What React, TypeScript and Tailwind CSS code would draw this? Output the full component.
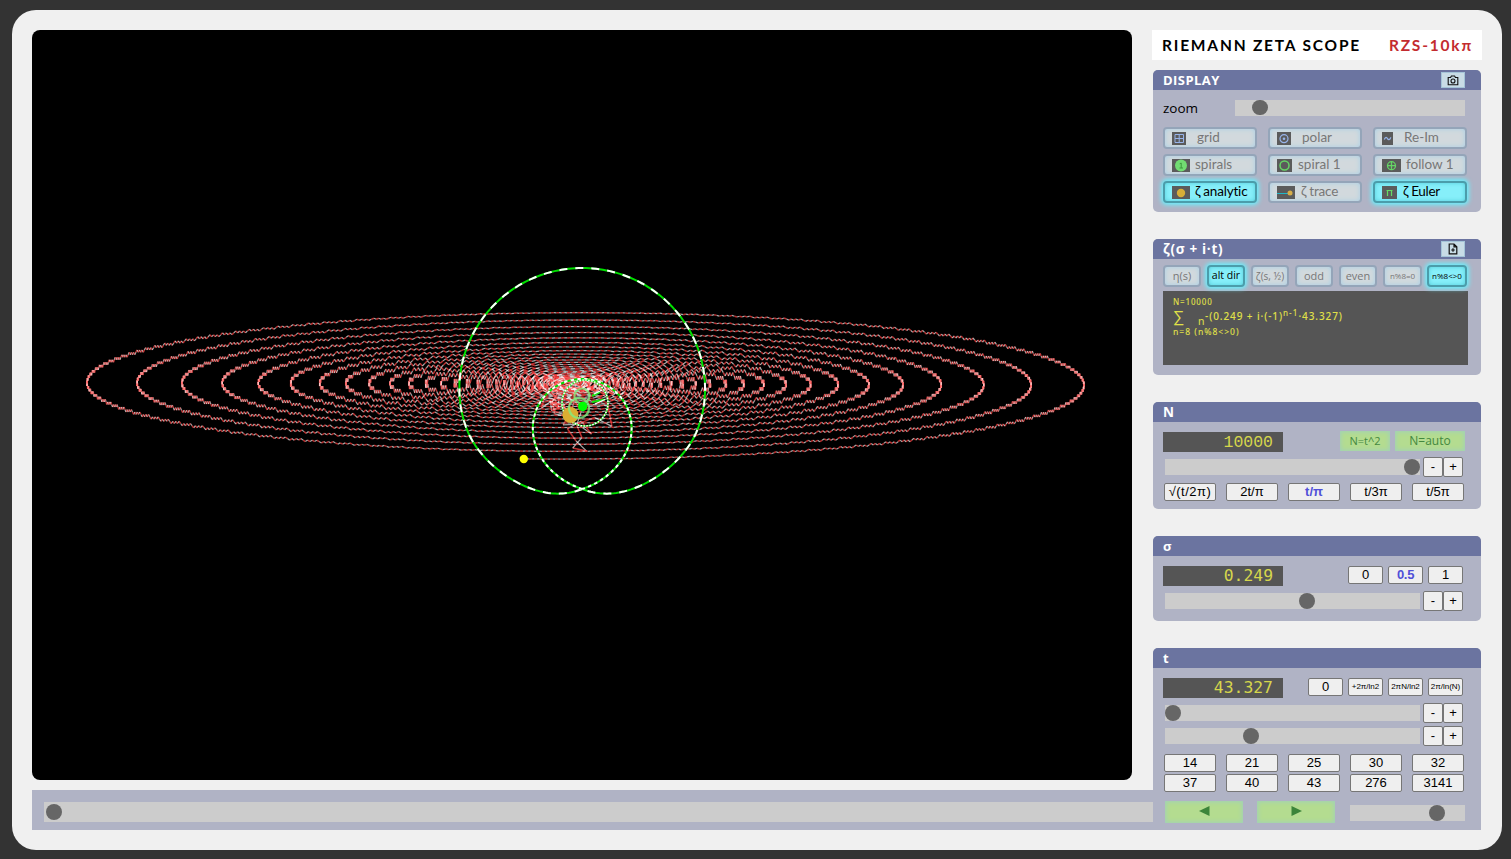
import React from "react";

const OX = 550;
const OY = 375;
const UNIT = 25.86;
const SIGMA = 0.249;
const T = 43.327;
const TERMS = 10000;

type Seg = { x1: number; y1: number; x2: number; y2: number; red: boolean };

function partialSums() {
  const segs: Seg[] = [];
  let x = 0;
  let y = 0;
  let k = 0;
  for (let n = 1; n <= TERMS; n++) {
    if (n % 8 === 0) continue;
    const m = Math.pow(n, -SIGMA);
    const a = (n % 2 === 1 ? -1 : 1) * T * Math.log(n);
    const nx = x + m * Math.cos(a);
    const ny = y + m * Math.sin(a);
    segs.push({
      x1: OX + x * UNIT,
      y1: OY - y * UNIT,
      x2: OX + nx * UNIT,
      y2: OY - ny * UNIT,
      red: k % 2 === 1,
    });
    x = nx;
    y = ny;
    k++;
  }
  return segs;
}

const SEGS = partialSums();
const f = (v: number) => v.toFixed(1);

// Limaçon; the outer lobe narrows towards the crossing and the inner loop is slightly widened.
function loopPath(from: number, to: number, inner: boolean) {
  let d = "";
  for (let i = 0; i <= 240; i++) {
    const th = from + ((to - from) * i) / 240;
    const r = 55.5 + 165.5 * Math.cos(th);
    const t = Math.min(1, Math.max(0, (Math.abs(th) - 1.1) / 0.6));
    const kx = inner ? 1.07 : 0.99 - 0.1 * t * t * (3 - 2 * t);
    d += (i ? "L" : "M") + f(550.2 + kx * r * Math.sin(th)) + " " + f(459 - r * Math.cos(th));
  }
  return d;
}
const CROSS = Math.acos(-55.5 / 165.5);
const OUTER = loopPath(-CROSS, CROSS, false);
const INNER = loopPath(CROSS, 2 * Math.PI - CROSS, true);

function Scope() {
  return (
    <svg width="1100" height="750" viewBox="0 0 1100 750" className="block">
      <g>
        {SEGS.map((s, i) => (
          <line
            key={i}
            x1={f(s.x1)}
            y1={f(s.y1)}
            x2={f(s.x2)}
            y2={f(s.y2)}
            stroke={s.red ? "#ff4040" : "#ffffff"}
            strokeOpacity={s.red ? 0.72 : 0.66}
            strokeWidth={s.red ? 1.5 : 1.2}
          />
        ))}
      </g>
      <g fill="none" strokeWidth="2">
        <path d={OUTER} stroke="#00e000" />
        <path d={OUTER} stroke="#fff" strokeDasharray="8 8" />
        <path d={INNER} stroke="#00e000" />
        <path d={INNER} stroke="#fff" strokeDasharray="3.4 3.4" />
        <circle cx="553" cy="373" r="23" stroke="#30e030" strokeWidth="1.6" />
        <circle cx="553" cy="373" r="23" stroke="#fff" strokeWidth="1.6" strokeDasharray="1.5 1.5" />
      </g>
      <circle cx="538.5" cy="385" r="8" fill="#dcae32" />
      <g fill="none" stroke="#80ee80" strokeWidth="2.2" strokeOpacity="0.8">
        <circle cx="550" cy="366" r="7.5" />
        <circle cx="547" cy="378" r="10" />
      </g>
      <path d="M560 366L568 362M560 372L573 369.5" stroke="#10e810" strokeWidth="2" fill="none" />
      <path d="M562 364L570 360M573 369.5L563 374" stroke="#fff" strokeWidth="1.3" fill="none" />
      <circle cx="550.7" cy="376.5" r="4.7" fill="#00ff00" />
      <circle cx="491.8" cy="429" r="4.2" fill="#ffff00" />
    </svg>
  );
}

function Slider({ box, thumb }: { box: string; thumb: string }) {
  return (
    <div className={`flex shrink-0 items-center bg-[#ccc] ${box}`}>
      <div className={`h-[15.5px] w-[15.5px] rounded-full bg-[#666] ${thumb}`} />
    </div>
  );
}

function Header({ children, icon }: { children: React.ReactNode; icon?: React.ReactNode }) {
  return (
    <div className="flex h-5 items-center justify-between rounded-t-[5px] bg-[#6b74a0] pr-4 pl-[10px] font-['Open_Sans',sans-serif] text-[13px] leading-5 font-bold text-white">
      <span>{children}</span>
      {icon && <span className="flex h-4 w-6 items-center justify-center border border-[#a4c4d8] bg-[#c8dce6] text-black">{icon}</span>}
    </div>
  );
}

const OFF = "border-[#94a5b9] bg-[#d2d9dd] text-[#777] shadow-[inset_0_0_5px_#a9d0e6]";
const ON = "border-[#4b9dab] bg-[#86effa] text-black shadow-[0_0_4px_2px_#6beefb,inset_0_0_4px_#56cedb]";

function Toggle({ on, icon, pad, children }: { on?: boolean; icon: React.ReactNode; pad: string; children: React.ReactNode }) {
  return (
    <button className={`flex h-[22px] w-[94px] items-center rounded-[4px] border-2 pl-[7px] font-[Lato,sans-serif] text-[13.5px] leading-none whitespace-nowrap ${on ? ON : OFF}`}>
      <span className="block h-[13px] bg-[#5b5b5b]">{icon}</span>
      <span className={pad}>{children}</span>
    </button>
  );
}

function Mode({ on, cls, children }: { on?: boolean; cls: string; children: React.ReactNode }) {
  return (
    <button className={`flex h-[22px] shrink-0 items-center justify-center rounded-[4px] border-2 font-['Open_Sans',sans-serif] whitespace-nowrap ${cls} ${on ? ON : OFF}`}>
      {children}
    </button>
  );
}

function Key({ cls, children }: { cls: string; children: React.ReactNode }) {
  return (
    <button className={`flex shrink-0 items-center justify-center rounded-[2px] border border-[#767676] bg-[#efefef] font-['Liberation_Sans',sans-serif] leading-none whitespace-nowrap ${cls}`}>
      {children}
    </button>
  );
}

function Green({ cls, children }: { cls: string; children: React.ReactNode }) {
  return (
    <button className={`flex shrink-0 items-center justify-center bg-[#b4dc90] font-['Open_Sans',sans-serif] text-[#43883f] shadow-[inset_0_0_4px_1px_#a0d0b8] ${cls}`}>
      {children}
    </button>
  );
}

function Readout({ cls, children }: { cls: string; children: React.ReactNode }) {
  return <div className={`flex h-5 w-[120px] shrink-0 items-center justify-end bg-[#555] pr-[10px] leading-none text-[#d6d64c] ${cls}`}>{children}</div>;
}

function SliderRow({ thumb, mt }: { thumb: string; mt: string }) {
  return (
    <div className={`ml-3 flex h-5 items-center ${mt}`}>
      <Slider box="h-4 w-[255px]" thumb={thumb} />
      <Key cls="ml-[3px] h-5 w-5 pb-px text-[13px]">-</Key>
      <Key cls="h-5 w-5 pb-px text-[13px]">+</Key>
    </div>
  );
}

const PANEL = "ml-px w-[328px] bg-[#b0b3c5]";
const WIDE = "h-[18px] w-[52px] pb-[2px] text-[13px]";
const SMALL = "h-[18px] w-[35px] pb-[2px] text-[13px]";
const TINY = "ml-[5px] h-[18px] w-[35px] text-[8px]";

const svg = (w: number, body: React.ReactNode) => (
  <svg width={w} height="13" viewBox={`0 0 ${w} 13`} fill="none" className="block">
    {body}
  </svg>
);

export default function App() {
  return (
    <div className="h-[859px] w-[1511px] overflow-hidden bg-[#333] pt-[10px] pl-3">
      <div className="flex h-[840px] w-[1490px] rounded-[24px] bg-[#f0f0f0] pt-5 pl-5">
        <div className="flex w-[1120px] shrink-0 flex-col">
          <div className="h-[750px] w-[1100px] overflow-hidden rounded-[8px] bg-black">
            <Scope />
          </div>
          <div className="mt-[10px] flex h-10 w-[1121px] items-start bg-[#b0b3c5] pt-3 pl-3">
            <Slider box="h-5 w-[1109px]" thumb="ml-[2px]" />
          </div>
        </div>

        <div className="flex w-[330px] shrink-0 flex-col">
          <div className="flex h-[30px] items-center justify-between bg-white pt-px pr-[9px] pl-[10px] font-[Lato,sans-serif] text-[15.5px] font-bold">
            <span className="tracking-[1.8px] whitespace-nowrap">RIEMANN ZETA SCOPE</span>
            <span className="tracking-[1.8px] text-[#c32b2f]">RZS-10kπ</span>
          </div>

          <section className={`${PANEL} mt-[10px] h-[142px] rounded-[5px]`}>
            <Header
              icon={
                <svg width="12" height="11" viewBox="0 0 12 11" fill="none" stroke="#111" strokeWidth="1.1">
                  <path d="M1.2 2.5H3.6L4.4 1H7.6L8.4 2.5H10.8V9.8H1.2Z" />
                  <circle cx="6" cy="6" r="2" />
                </svg>
              }
            >
              <span className="tracking-[0.45px]">DISPLAY</span>
            </Header>
            <div className="mt-[8px] flex h-5 items-center pl-[10px] font-['Open_Sans',sans-serif] text-[13.5px]">
              <span className="w-[72px]">zoom</span>
              <Slider box="-mt-px h-4 w-[230px]" thumb="ml-[17px]" />
            </div>
            <div className="mt-[9px] grid w-[304px] grid-cols-[94px_94px_94px] gap-x-[11px] gap-y-[5px] pl-[10px]">
              <Toggle pad="ml-[11px]" icon={svg(14, <path d="M3 2.5H11.5V10.5H3ZM7.2 2.5V10.5M3 6.5H11.5" stroke="#98b4ea" />)}>grid</Toggle>
              <Toggle pad="ml-[11px]" icon={svg(14, <><circle cx="7" cy="6.7" r="4" stroke="#98b4ea" strokeWidth="1.2" /><circle cx="7" cy="6.7" r="1.3" fill="#98b4ea" /></>)}>polar</Toggle>
              <Toggle pad="ml-[11px]" icon={svg(11, <path d="M2.3 7.6C3.5 4.5 4.7 5.2 5.5 6.6S7.8 8.4 8.8 5.4" stroke="#98b4ea" strokeWidth="1.3" />)}>Re-Im</Toggle>
              <Toggle pad="ml-[5px]" icon={svg(18, <><circle cx="9" cy="6.5" r="6" fill="#72dc72" /><path d="M7.7 4.8L9.2 4V9M7.5 9H11" stroke="#3c9a3c" /></>)}>spirals</Toggle>
              <Toggle pad="ml-[6px]" icon={svg(15, <circle cx="7.5" cy="6.5" r="4.5" stroke="#65d565" strokeWidth="1.5" />)}>spiral 1</Toggle>
              <Toggle pad="ml-[5px]" icon={svg(19, <><circle cx="9.5" cy="6.7" r="4" stroke="#65d565" strokeWidth="1.3" /><path d="M9.5 2.7V10.7M5.5 6.7H13.5" stroke="#65d565" strokeWidth="1.3" /></>)}>follow 1</Toggle>
              <Toggle on pad="ml-[5px] tracking-[-0.2px]" icon={svg(18, <circle cx="9" cy="7" r="4.2" fill="#d8ae38" />)}>ζ analytic</Toggle>
              <Toggle pad="ml-[6px] tracking-[-0.2px]" icon={svg(18, <><path d="M0 7.5H12" stroke="#20b8c8" /><circle cx="13" cy="7" r="2.5" fill="#d8ae48" /></>)}>ζ trace</Toggle>
              <Toggle on pad="ml-[6px] tracking-[-0.3px]" icon={svg(15, <path d="M5.5 10V4.5M9.5 10V4.5M4.5 4.5H10.5" stroke="#65dc65" strokeWidth="1.2" />)}>ζ Euler</Toggle>
            </div>
          </section>

          <section className={`${PANEL} mt-[27px] h-[136px] rounded-[5px]`}>
            <Header
              icon={
                <svg width="10" height="12" viewBox="0 0 10 12" fill="none" stroke="#111" strokeWidth="1.2">
                  <path d="M1.2 1H6L8.8 3.8V10.8H1.2ZM6 1V3.8H8.8M5 5.2V8.8M3.2 7H6.8" />
                </svg>
              }
            >
              <span className="text-[13.5px] tracking-[0.7px]">ζ(σ + i·t)</span>
            </Header>
            <div className="mt-[6px] flex h-[22px] w-[316px] pl-[10px]">
              <Mode cls="w-[38px] text-[11px]">η(s)</Mode>
              <Mode on cls="ml-[6px] w-[38px] text-[10.5px]">alt dir</Mode>
              <Mode cls="ml-[6px] w-[38px] text-[10px]">ζ(s, ½)</Mode>
              <Mode cls="ml-[6px] w-[38px] text-[11px]">odd</Mode>
              <Mode cls="ml-[6px] w-[38px] text-[11px]">even</Mode>
              <Mode cls="ml-[6px] w-[39px] text-[8px]">n%8=0</Mode>
              <Mode on cls="ml-[5px] w-[40px] text-[8px]">n%8&lt;&gt;0</Mode>
            </div>
            <div className="mt-[4px] ml-[10px] flex h-[74px] w-[305px] flex-col bg-[#555] pt-[5px] pl-[10px] font-['Noto_Sans',sans-serif] text-[#e0e048]">
              <div className="h-3 text-[8px] leading-3 font-medium tracking-[0.85px]">N=10000</div>
              <div className="flex h-[18px] whitespace-nowrap">
                <span className="w-[25px] text-[16px] leading-[16px]">∑</span>
                <span className="mt-[4px] text-[10.5px] leading-[18px] tracking-[0.6px]">n</span>
                <span className="text-[10px] leading-[17px] font-medium tracking-[0.9px]">-(0.249 + i·(-1)</span>
                <span className="-mt-[4px] text-[8px] leading-[17px] font-medium tracking-[1.1px]">n-1</span>
                <span className="text-[10px] leading-[17px] font-medium tracking-[0.9px]">·43.327)</span>
              </div>
              <div className="h-3 text-[8.5px] leading-3 font-medium tracking-[1px]">n=8 (n%8&lt;&gt;0)</div>
            </div>
          </section>

          <section className={`${PANEL} mt-[27px] h-[107px] rounded-[5px]`}>
            <Header><span className="text-[13.5px]">N</span></Header>
            <div className="mt-[9px] flex h-[21px] pl-[10px]">
              <Readout cls="mt-px pt-[2px] font-['Liberation_Mono',monospace] text-[16.5px]">10000</Readout>
              <Green cls="ml-[57px] h-5 w-[50px] text-[11px]">N=t^2</Green>
              <Green cls="ml-[5px] h-5 w-[70px] text-[12px]">N=auto</Green>
            </div>
            <SliderRow mt="mt-[5px]" thumb="ml-[239px]" />
            <div className="mt-[6px] flex gap-[10px] pl-[11px]">
              <Key cls={`${WIDE} tracking-[0.5px]`}>√(t/2π)</Key>
              <Key cls={WIDE}>2t/π</Key>
              <Key cls={`${WIDE} font-bold text-[#5050d8]`}>t/π</Key>
              <Key cls={WIDE}>t/3π</Key>
              <Key cls={WIDE}>t/5π</Key>
            </div>
          </section>

          <section className={`${PANEL} mt-[27px] h-[85px] rounded-[5px]`}>
            <Header>σ</Header>
            <div className="mt-[10px] flex h-5 pl-[10px]">
              <Readout cls="font-['DejaVu_Sans_Mono',monospace] text-[16.4px]">0.249</Readout>
              <Key cls={`${SMALL} ml-[65px]`}>0</Key>
              <Key cls={`${SMALL} ml-[5px] font-bold tracking-[-0.3px] text-[#5050d8]`}>0.5</Key>
              <Key cls={`${SMALL} ml-[5px]`}>1</Key>
            </div>
            <SliderRow mt="mt-[5px]" thumb="ml-[134px]" />
          </section>

          <section className={`${PANEL} mt-[27px] h-[182px] rounded-t-[5px]`}>
            <Header>t</Header>
            <div className="mt-[10px] flex h-5 pl-[10px]">
              <Readout cls="font-['DejaVu_Sans_Mono',monospace] text-[16.4px]">43.327</Readout>
              <Key cls={`${SMALL} ml-[25px]`}>0</Key>
              <Key cls={TINY}>+2π/ln2</Key>
              <Key cls={TINY}>2πN/ln2</Key>
              <Key cls={TINY}>2π/ln(N)</Key>
            </div>
            <SliderRow mt="mt-[5px]" thumb="ml-0" />
            <SliderRow mt="mt-[3px]" thumb="ml-[78px]" />
            <div className="mt-[8px] grid w-[332px] grid-cols-[repeat(5,52px)] gap-x-[10px] gap-y-[2px] pl-[11px]">
              {["14", "21", "25", "30", "32", "37", "40", "43", "276", "3141"].map((v) => (
                <Key key={v} cls={WIDE}>{v}</Key>
              ))}
            </div>
            <div className="mt-[9px] flex h-[22px] pl-3">
              <Green cls="h-[22px] w-[78px] pb-[2px]">
                <svg width="11" height="10" viewBox="0 0 11 10"><path d="M0 5L10.5 0V10Z" fill="#3c853a" /></svg>
              </Green>
              <Green cls="ml-[14px] h-[22px] w-[78px] pb-[2px]">
                <svg width="11" height="10" viewBox="0 0 11 10"><path d="M11 5L.5 0V10Z" fill="#3c853a" /></svg>
              </Green>
              <Slider box="mt-[4px] ml-[15px] h-4 w-[115px]" thumb="ml-[79px]" />
            </div>
          </section>
        </div>
      </div>
    </div>
  );
}
